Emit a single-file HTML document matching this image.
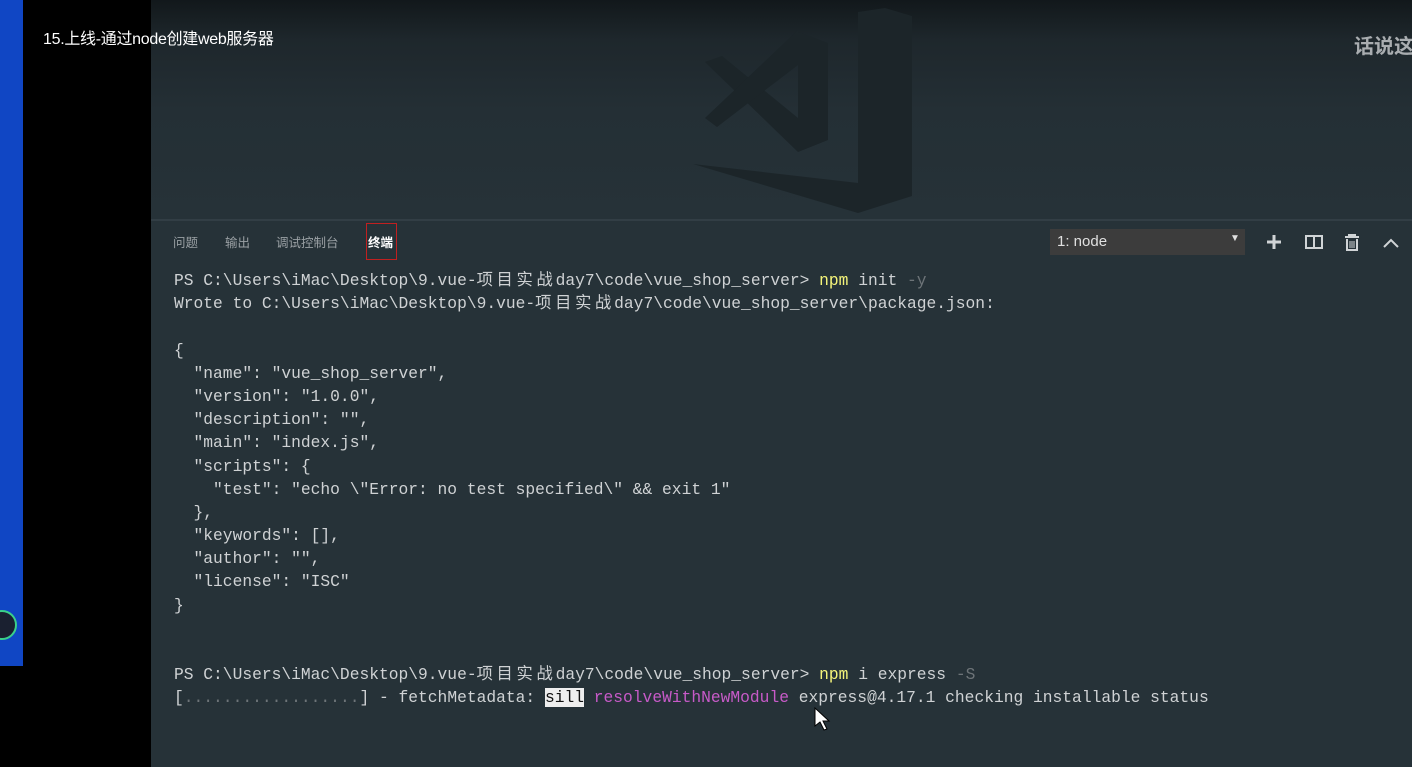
<!DOCTYPE html>
<html><head><meta charset="utf-8"><style>
*{margin:0;padding:0;box-sizing:border-box}
body{width:1412px;height:767px;overflow:hidden;background:#000;position:relative;font-family:"Liberation Sans","Noto Sans CJK SC",sans-serif}
.blue{position:absolute;left:0;top:0;width:23px;height:666px;background:#1046c4}
.main{position:absolute;left:151px;top:0;width:1261px;height:767px;background:linear-gradient(#12181b 0px,#1e272c 40px,#242f35 110px,#263238 220px)}
.title{position:absolute;left:43px;top:25px;color:#fff;font-size:16px;letter-spacing:-0.3px}
.tr{position:absolute;left:1354px;top:30px;color:#a9adb0;font-size:20px;font-weight:bold;font-family:"Noto Sans CJK SC",sans-serif;white-space:nowrap}
.sep{position:absolute;left:151px;top:219px;width:1261px;height:2px;background:#323e45}
.tab{position:absolute;top:232px;font-size:12.5px;color:#9aa0a4;font-family:"Noto Sans CJK SC",sans-serif}
.red{position:absolute;left:366px;top:223px;width:31px;height:37px;border:1.5px solid #c02020}
.dd{position:absolute;left:1050px;top:229px;width:195px;height:26px;background:#3c3c3c;color:#e0e0e0;font-size:15px;padding:4px 0 0 7px}
.term{position:absolute;left:174px;top:269px;font-family:"Liberation Mono","Noto Sans CJK SC",monospace;font-size:16.27px;line-height:23.18px;color:#cfd2d4;white-space:pre}
.c{display:inline-block;width:79px;letter-spacing:3.7px}
.y{color:#f5f57a}.g{color:#6d7478}.m{color:#c75ac8}.s{background:#eee;color:#111}
</style></head><body>
<div class="blue"></div>
<div class="main"></div>
<svg style="position:absolute;left:0;top:0" width="1412" height="767">
<g fill="#1c2529">
<polygon points="705,62,722,56,798,118,798,152"/>
<polygon points="705,118,798,30,798,65,717,127"/>
<polygon points="798,32,828,43,828,140,798,152"/>
<polygon points="858,12,885,8,912,16,912,196,858,213"/>
<polygon points="693,164,858,183,858,213"/>
</g>
<circle cx="2" cy="625" r="14" fill="#1a2030" stroke="#3ad08a" stroke-width="2"/>
<polygon points="815,708,815,726,820,722,824,730,827,729,823,721,829,721" fill="#fff" stroke="#000" stroke-width="1"/>
</svg>
<div class="title">15.上线-通过node创建web服务器</div>
<div class="tr">话说这</div>
<div class="sep"></div>
<div class="tab" style="left:173px">问题</div>
<div class="tab" style="left:225px">输出</div>
<div class="tab" style="left:276px">调试控制台</div>
<div class="tab" style="left:368px;color:#fff;font-weight:bold">终端</div>
<div class="red"></div>
<div class="dd">1: node<span style="position:absolute;left:180px;top:4px;font-size:10px">▼</span></div>
<svg style="position:absolute;left:1262px;top:232px" width="140" height="22" fill="none" stroke="#d0d4d6" stroke-width="3">
<path d="M12 3v14M5 10h14"/>
<rect x="44" y="4" width="16" height="12" stroke-width="2"/><path d="M52 4v12" stroke-width="2"/>
<path d="M83 5h14M87 5V3h6v2M85 7v11h10V7" stroke-width="2"/><path d="M88 9v7M90 9v7M92 9v7" stroke-width="1"/>
<path d="M122 15l7-7 7 7" stroke-width="2"/>
</svg>
<div class="term">PS C:\Users\iMac\Desktop\9.vue-<span class="c">项目实战</span>day7\code\vue_shop_server> <span class="y">npm</span> init <span class="g">-y</span>
Wrote to C:\Users\iMac\Desktop\9.vue-<span class="c">项目实战</span>day7\code\vue_shop_server\package.json:

{
  "name": "vue_shop_server",
  "version": "1.0.0",
  "description": "",
  "main": "index.js",
  "scripts": {
    "test": "echo \"Error: no test specified\" &amp;&amp; exit 1"
  },
  "keywords": [],
  "author": "",
  "license": "ISC"
}


PS C:\Users\iMac\Desktop\9.vue-<span class="c">项目实战</span>day7\code\vue_shop_server> <span class="y">npm</span> i express <span class="g">-S</span>
[<span class="g">..................</span>] - fetchMetadata: <span class="s">sill</span> <span class="m">resolveWithNewModule</span> express@4.17.1 checking installable status</div>
</body></html>
